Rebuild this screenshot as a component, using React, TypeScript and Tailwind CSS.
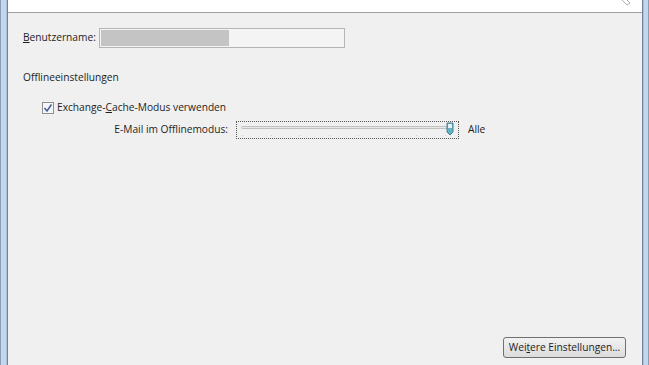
export default function App() {
  return (
    <div className="flex h-[365px] w-[649px] overflow-hidden bg-[#f0f0f0] font-['Open_Sans',sans-serif] text-[10.2px] text-[#1e1e1e]">
      {/* left window frame */}
      <div className="flex w-[8px] shrink-0">
        <div className="w-px bg-[#8a9db5]" />
        <div className="w-[5px] bg-[#c3d6ec]" />
        <div className="w-px bg-[#a8bfd9]" />
        <div className="w-px bg-[#6f839c]" />
      </div>

      <div className="flex flex-1 flex-col">
        {/* header strip */}
        <div className="relative h-[13px] border-b border-[#a0a0a0] bg-white">
          <svg className="absolute right-[10px] top-[-4px]" width="14" height="14" viewBox="0 0 14 14">
            <path d="M1 1 L9 9 L12 7 L4 -1" fill="none" stroke="#b0b0b0" strokeWidth="1" />
          </svg>
        </div>

        <div className="flex flex-1 flex-col pl-[15px] pr-[8px]">
          <div className="mt-[15px] flex items-center">
            <span className="w-[76px]">
              <u>B</u>enutzername:
            </span>
            <div className="h-[20px] w-[246px] border border-[#b5b5b5] bg-[#f4f4f4] p-px">
              <div className="h-full w-[128px] bg-[#c4c4c4]" />
            </div>
          </div>

          <div className="mt-[22px]">Offlineeinstellungen</div>

          <div className="mt-[15px] ml-[19px] flex items-center gap-[3px]">
            <div className="flex h-[12px] w-[12px] items-center justify-center border border-[#8e8f8f] bg-[#f4f6fa]">
              <svg width="10" height="10" viewBox="0 0 10 10">
                <path d="M1.5 5 L4 8 L8.5 1.5" fill="none" stroke="#4a5f97" strokeWidth="1.6" />
              </svg>
            </div>
            <span>
              Exchange-<u>C</u>ache-Modus verwenden
            </span>
          </div>

          <div className="mt-[5px] flex items-center">
            <span className="w-[205px] text-right">E-Mail im Offlinemodus:</span>
            <div className="relative ml-[8px] h-[18px] w-[223px] border border-dotted border-[#555]">
              <div className="absolute left-[4px] top-[4px] h-[3px] w-[208px] rounded-sm border border-[#c0c0c0] bg-[#e8e8e8]" />
              <div className="absolute left-[5px] right-[12px] top-[13px] flex justify-between">
                {[0, 1, 2, 3, 4, 5, 6, 7].map((i) => (
                  <div key={i} className="h-[1px] w-px bg-[#d0d0d0]" />
                ))}
              </div>
              <svg className="absolute left-[209px] top-[0px]" width="8" height="14" viewBox="0 0 8 14">
                <path d="M1 1 H7 V10 L4 13 L1 10 Z" fill="#5fb3c2" stroke="#4a7f93" strokeWidth="1" />
                <path d="M2 2 H6 V6 H2 Z" fill="#e4f1f5" />
              </svg>
            </div>
            <span className="ml-[9px]">Alle</span>
          </div>

          <div className="flex-1" />

          <div className="mb-[7px] flex justify-end pr-[8px]">
            <button className="h-[21px] w-[123px] whitespace-nowrap rounded-[3px] border border-[#707070] bg-gradient-to-b from-[#f2f2f2] to-[#dcdcdc] text-[10.2px] text-[#1e1e1e]">
              Wei<u>t</u>ere Einstellungen...
            </button>
          </div>
        </div>
      </div>

      {/* right window frame */}
      <div className="flex w-[7px] shrink-0">
        <div className="w-px bg-[#6f839c]" />
        <div className="w-px bg-[#a8bfd9]" />
        <div className="w-[4px] bg-[#c3d6ec]" />
        <div className="w-px bg-[#8a9db5]" />
      </div>
    </div>
  );
}
